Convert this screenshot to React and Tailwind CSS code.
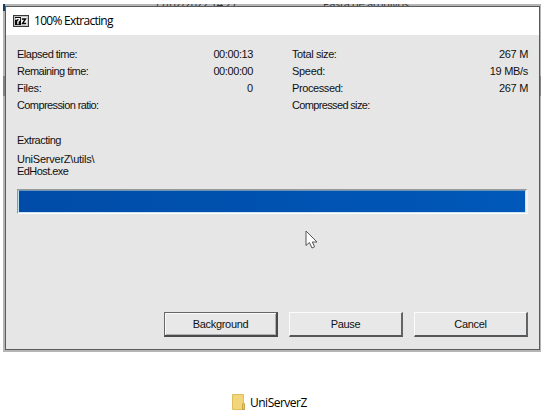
const SANS = "font-['Liberation_Sans',Arial,sans-serif]";
const UI = "font-['Open_Sans','Noto_Sans',sans-serif]";

function Row({ label, value, labelClass = "", valueClass = "" }) {
  return (
    <div className="flex h-[17px] items-center justify-between whitespace-nowrap">
      <span className={labelClass}>{label}</span>
      <span className={valueClass}>{value}</span>
    </div>
  );
}

function Button({ children, primary }) {
  const edge = primary
    ? "border-t-[#666] border-l-[#666] border-r-[#484b4d] border-b-[#484b4d] border-t border-l border-r-2 border-b-2 shadow-[inset_1px_1px_0_#fafafa,inset_-1px_-1px_0_#b0b0b0]"
    : "border-t-[#fcfcfc] border-l-[#fcfcfc] border-r-[#626568] border-b-[#55585b] border-t border-l border-r-2 border-b-2";
  return (
    <button className={`h-[25px] w-[114px] bg-[#e8e8e8] text-center ${edge}`}>
      {children}
    </button>
  );
}

function SevenZipIcon() {
  return (
    <svg width="16" height="12" viewBox="0 0 16 12" className="block">
      <rect width="16" height="12" fill="#3a3a3a" />
      <rect x="1" y="1" width="14" height="10" fill="#c4c4c4" />
      <rect x="2" y="2" width="6" height="8" fill="#080808" />
      <path d="M3 5V3.7H6.5V5L4.9 6.5V9.2" stroke="#fff" strokeWidth="1.3" fill="none" />
      <rect x="8" y="2" width="6" height="8" fill="#f4f4f4" />
      <path d="M8.8 4H12.4L9.6 8.4H13.2" stroke="#080808" strokeWidth="1.5" fill="none" />
    </svg>
  );
}

function Folder() {
  return (
    <svg width="14" height="17" viewBox="0 0 14 17" className="block">
      <path d="M.5.5H11.5V9L12.5 10V15.5H.5Z" fill="#f3d67c" stroke="#dfbd59" />
      <path d="M10.5 15.5V10L11.5 9L12.5 10V15.5Z" fill="#edcd68" stroke="#bd9a3d" strokeWidth=".8" />
    </svg>
  );
}

export default function App() {
  return (
    <div className={`relative h-[419px] w-[547px] overflow-hidden bg-white text-[11px] leading-[12px] text-[#111] ${SANS}`}>
      <div className="pt-1 pl-[3px]">
        <div className="relative h-[348px] w-[538px] overflow-hidden bg-[#b5b5b5] pt-[2px] pl-[2px]">
          <div className={`absolute top-[-6px] left-[151px] flex h-[12px] w-[300px] text-[11px] whitespace-nowrap text-[#333] ${UI}`}>
            <span className="w-[169px] tracking-[-0.4px]">17/02/2022 14:27</span>
            <span className="tracking-[-0.3px]">Pasta de arquivos</span>
          </div>
          <div className="absolute top-0 left-0 h-[7px] w-[2px] bg-[#173b5c]" />
          <div className="absolute top-[72px] left-0 h-[20px] w-[2px] bg-[#858585]" />
          <div className="absolute top-[72px] right-0 h-[20px] w-[2px] bg-[#858585]" />
          <main className="relative flex h-[344px] w-[535px] flex-col border border-[#5a5a5a] bg-[#e6e6e6]">
            <header className={`flex h-[28px] shrink-0 items-center bg-white pl-[7px] text-[12px] text-black ${UI}`}>
              <SevenZipIcon />
              <h1 className="ml-[5px] tracking-[-0.7px] whitespace-nowrap">100% Extracting</h1>
            </header>
            <section className="mt-[10px] flex gap-[39px] pl-[11px]">
              <div className="w-[236px]">
                <Row label="Elapsed time:" value="00:00:13" labelClass="tracking-[-0.5px]" valueClass="tracking-[-0.4px]" />
                <Row label="Remaining time:" value="00:00:00" labelClass="tracking-[-0.55px]" valueClass="tracking-[-0.4px]" />
                <Row label="Files:" value="0" labelClass="tracking-[-0.3px]" />
                <Row label="Compression ratio:" value="" labelClass="tracking-[-0.6px]" />
              </div>
              <div className="w-[236px]">
                <Row label="Total size:" value="267 M" labelClass="tracking-[-0.4px]" valueClass="tracking-[-0.3px]" />
                <Row label="Speed:" value="19 MB/s" labelClass="tracking-[-0.3px]" valueClass="tracking-[-0.3px]" />
                <Row label="Processed:" value="267 M" labelClass="tracking-[-0.4px]" valueClass="tracking-[-0.3px]" />
                <Row label="Compressed size:" value="" labelClass="tracking-[-0.65px]" />
              </div>
            </section>
            <section className="mt-[21px] pl-[11px]">
              <p className="tracking-[-0.5px]">Extracting</p>
              <p className="mt-[7px] tracking-[-0.23px]">UniServerZ\utils\</p>
              <p className="tracking-[-0.55px]">EdHost.exe</p>
            </section>
            <div className="mt-[12px] ml-[11px] h-[25px] w-[511px] border-t border-r-2 border-b border-l border-t-[#999] border-r-[#f2f2f2] border-b-white border-l-[#999]">
              <div className="h-full border border-t-[#6a95b5] border-r-[#c8e5f5] border-b-[#c8e5f5] border-l-[#c0e0ed] bg-linear-to-r from-[#004ca8] to-[#0058b8]" />
            </div>
            <footer className="mt-[98px] flex gap-[11px] pl-[158px] tracking-[-0.3px]">
              <Button primary>Background</Button>
              <Button>Pause</Button>
              <Button>Cancel</Button>
            </footer>
          </main>
        </div>
      </div>
      <svg width="14" height="20" viewBox="0 0 14 20" className="absolute top-[230px] left-[305px]">
        <path d="M1 1V15.5L4.4 12.5L7 18L9.6 16.8L7.3 12H12Z" fill="white" stroke="#555" strokeWidth="1" />
      </svg>
      <div className={`mt-[42px] flex h-[17px] items-center gap-1 pl-[232px] text-[12px] text-black ${UI}`}>
        <Folder />
        <span className="tracking-[-0.5px]">UniServerZ</span>
      </div>
    </div>
  );
}
